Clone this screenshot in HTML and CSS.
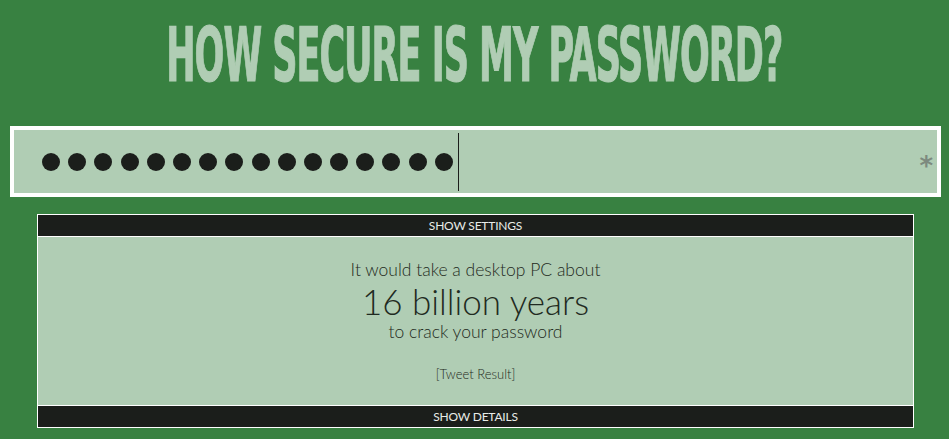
FILE: index.html
```html
<!DOCTYPE html>
<html>
<head>
<meta charset="utf-8">
<link rel="stylesheet" href="styles.css">
</head>
<body>
<h1 class="title"><span class="title-text">HOW SECURE IS MY PASSWORD?</span></h1>
<div class="pw-box">
  <div class="pw-field">
    <div class="dots">
      <span class="dot"></span><span class="dot"></span><span class="dot"></span><span class="dot"></span>
      <span class="dot"></span><span class="dot"></span><span class="dot"></span><span class="dot"></span>
      <span class="dot"></span><span class="dot"></span><span class="dot"></span><span class="dot"></span>
      <span class="dot"></span><span class="dot"></span><span class="dot"></span><span class="dot"></span>
      <span class="caret"></span>
    </div>
    <span class="toggle">*</span>
  </div>
</div>
<div class="panel">
  <div class="bar">SHOW SETTINGS</div>
  <div class="result">
    <p class="line small">It would take a desktop PC about</p>
    <p class="line big">16 billion years</p>
    <p class="line small">to crack your password</p>
    <p class="tweet">[Tweet Result]</p>
  </div>
  <div class="bar">SHOW DETAILS</div>
</div>
</body>
</html>
```
FILE: styles.css
```css
html, body {
  margin: 0;
  padding: 0;
  background: #388141;
  height: 100%;
  overflow: hidden;
}
.title {
  margin: 0;
  padding-top: 15px;
  height: 112px;
  box-sizing: border-box;
  display: flex;
  justify-content: center;
  white-space: nowrap;
  font-family: "DejaVu Sans Condensed", "DejaVu Sans", sans-serif;
  font-weight: 700;
  font-size: 75px;
  line-height: 80px;
  color: #b0cdb4;
  letter-spacing: -2px;
}
.title-text {
  flex-shrink: 0;
  display: inline-block;
  transform: scaleX(0.52);
  transform-origin: center;
  -webkit-text-stroke: 1.2px #b0cdb4;
}
.pw-box {
  margin: 14px 8px 0 10px;
  border: 4px solid #ffffff;
  background: #b0cdb4;
  height: 63px;
}
.pw-field {
  display: flex;
  align-items: center;
  justify-content: space-between;
  height: 100%;
  padding: 0 4px 0 28px;
}
.dots {
  display: flex;
  align-items: center;
  gap: 8.2px;
}
.dot {
  flex-shrink: 0;
  width: 18px;
  height: 18px;
  border-radius: 50%;
  background: #1b1e1b;
}
.caret {
  flex-shrink: 0;
  width: 1px;
  height: 58px;
  background: #1b1e1b;
  margin-left: -3px;
}
.toggle {
  font-family: "DejaVu Sans", sans-serif;
  font-weight: 700;
  font-size: 26px;
  color: #7d8a7f;
  line-height: 1;
  padding-top: 9px;
}
.panel {
  width: 875px;
  margin: 17px auto 0 auto;
  border: 1px solid #ffffff;
  position: relative;
  left: 1px;
}
.bar {
  background: #1b1e1b;
  color: #e8ece8;
  font-family: Lato, "Open Sans", sans-serif;
  font-size: 12px;
  text-align: center;
  height: 21px;
  line-height: 22px;
  letter-spacing: -0.2px;
}
.result {
  background: #b0cdb4;
  border-top: 1px solid #ffffff;
  border-bottom: 1px solid #ffffff;
  height: 170px;
  box-sizing: border-box;
  text-align: center;
  font-family: Lato, "Open Sans", sans-serif;
  font-weight: 300;
  color: #1f2a21;
  padding-top: 22px;
}
.line {
  margin: 0;
}
.small {
  font-size: 17.5px;
  line-height: 22px;
}
.big {
  font-size: 35px;
  line-height: 40px;
}
.tweet {
  margin: 22px 0 0 0;
  font-size: 13px;
  line-height: 18px;
}
```
